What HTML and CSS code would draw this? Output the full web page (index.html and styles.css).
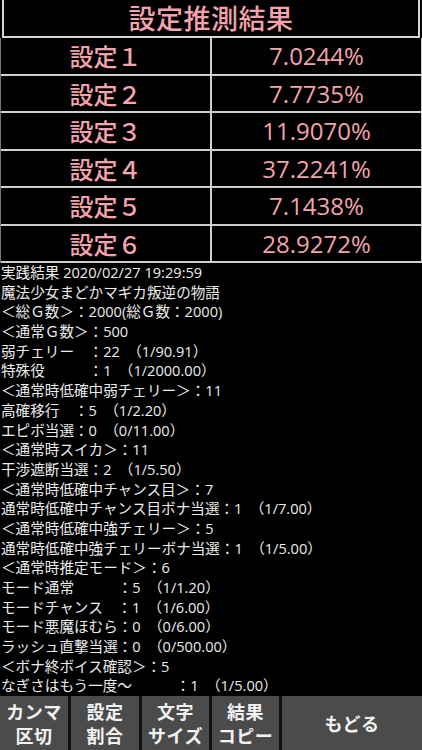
FILE: index.html
```html
<!DOCTYPE html>
<html lang="ja">
<head>
<meta charset="utf-8">
<title>設定推測結果</title>
<link rel="stylesheet" href="styles.css">
</head>
<body>
<div class="app">
  <div class="title">設定推測結果</div>
  <div class="table">
    <div class="cell label">設定１</div><div class="cell value">7.0244%</div>
    <div class="cell label">設定２</div><div class="cell value">7.7735%</div>
    <div class="cell label">設定３</div><div class="cell value">11.9070%</div>
    <div class="cell label">設定４</div><div class="cell value">37.2241%</div>
    <div class="cell label">設定５</div><div class="cell value">7.1438%</div>
    <div class="cell label">設定６</div><div class="cell value">28.9272%</div>
  </div>
  <div class="log">
    <div class="line">実践結果 2020/02/27 19:29:59</div>
    <div class="line">魔法少女まどかマギカ叛逆の物語</div>
    <div class="line">＜総Ｇ数＞：2000(総Ｇ数：2000)</div>
    <div class="line">＜通常Ｇ数＞：500</div>
    <div class="line">弱チェリー　：22　（1/90.91）</div>
    <div class="line">特殊役　　　：1　（1/2000.00）</div>
    <div class="line">＜通常時低確中弱チェリー＞：11</div>
    <div class="line">高確移行　：5　（1/2.20）</div>
    <div class="line">エピボ当選：0　（0/11.00）</div>
    <div class="line">＜通常時スイカ＞：11</div>
    <div class="line">干渉遮断当選：2　（1/5.50）</div>
    <div class="line">＜通常時低確中チャンス目＞：7</div>
    <div class="line">通常時低確中チャンス目ボナ当選：1　（1/7.00）</div>
    <div class="line">＜通常時低確中強チェリー＞：5</div>
    <div class="line">通常時低確中強チェリーボナ当選：1　（1/5.00）</div>
    <div class="line">＜通常時推定モード＞：6</div>
    <div class="line">モード通常　　　：5　（1/1.20）</div>
    <div class="line">モードチャンス　：1　（1/6.00）</div>
    <div class="line">モード悪魔ほむら：0　（0/6.00）</div>
    <div class="line">ラッシュ直撃当選：0　（0/500.00）</div>
    <div class="line">＜ボナ終ボイス確認＞：5</div>
    <div class="line">なぎさはもう一度～　　　：1　（1/5.00）</div>
  </div>
  <div class="buttons">
    <div class="btn">カンマ<br>区切</div>
    <div class="btn">設定<br>割合</div>
    <div class="btn">文字<br>サイズ</div>
    <div class="btn">結果<br>コピー</div>
    <div class="btn">もどる</div>
  </div>
</div>
</body>
</html>
```
FILE: styles.css
```css
html, body {
  margin: 0;
  padding: 0;
  background: #000;
}
body {
  font-family: "Open Sans", "Noto Sans CJK JP", sans-serif;
}
.app {
  width: 422px;
  height: 750px;
  display: flex;
  flex-direction: column;
  overflow: hidden;
  background: #000;
}
.title {
  flex-shrink: 0;
  height: 36px;
  margin: 0 2px;
  border-left: 2px solid #d8d8d8;
  border-right: 2px solid #d8d8d8;
  border-bottom: 2px solid #d8d8d8;
  color: #f3a3ad;
  font-family: "Noto Sans CJK JP", sans-serif;
  font-size: 27px;
  font-weight: 500;
  line-height: 36px;
  text-align: center;
  letter-spacing: 0.5px;
  overflow: hidden;
}
.table {
  flex-shrink: 0;
  display: grid;
  grid-template-columns: 209px 1fr;
  grid-auto-rows: 35.5px;
  gap: 2px;
  background: #cfcfcf;
  padding: 0 1px 2px 0;
  border-left: 1px solid #777;
}
.cell {
  background: #000;
  color: #f3a3ad;
  line-height: 35.5px;
  text-align: center;
}
.label {
  font-family: "Noto Sans CJK JP", sans-serif;
  font-size: 24px;
  font-weight: 500;
}
.value {
  font-family: "Open Sans", sans-serif;
  font-size: 24px;
  font-weight: 400;
}
.log {
  flex: 1 1 0;
  min-height: 0;
  overflow: hidden;
  color: #ececec;
  font-size: 14.6px;
  line-height: 19.7px;
  padding-left: 1px;
}
.line {
  white-space: pre;
  height: 19.7px;
}
.buttons {
  flex-shrink: 0;
  height: 54px;
  display: grid;
  grid-template-columns: 68px 68px 67px 67px 1fr;
  gap: 3px;
  background: #111;
}
.btn {
  background: #4b4b4b;
  color: #f2f2f2;
  font-family: "Noto Sans CJK JP", sans-serif;
  font-size: 18px;
  font-weight: 700;
  line-height: 24px;
  display: flex;
  align-items: center;
  justify-content: center;
  text-align: center;
  letter-spacing: 0.5px;
  overflow: hidden;
}
```
